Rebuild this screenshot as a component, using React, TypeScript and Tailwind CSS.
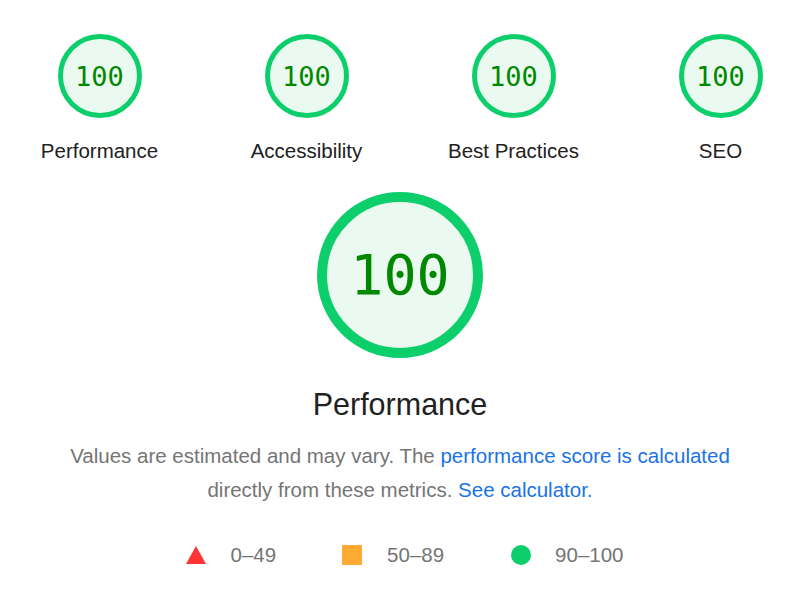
import React from "react";

function Gauge({ size, stroke, fontClass }: { size: number; stroke: number; fontClass: string }) {
  const r = size / 2 - stroke / 2;
  return (
    <div className="relative flex items-center justify-center" style={{ width: size, height: size }}>
      <svg width={size} height={size} viewBox={`0 0 ${size} ${size}`} className="absolute inset-0">
        <circle cx={size / 2} cy={size / 2} r={r} fill="#ebfaf1" stroke="#0ccf6b" strokeWidth={stroke} />
      </svg>
      <span className={`relative text-[#008800] ${fontClass}`} style={{ fontFamily: '"DejaVu Sans Mono", monospace' }}>
        100
      </span>
    </div>
  );
}

export default function App() {
  const cats = ["Performance", "Accessibility", "Best Practices", "SEO"];
  return (
    <div className="w-[800px] h-[600px] bg-white overflow-hidden" style={{ fontFamily: '"Liberation Sans", Arial, sans-serif' }}>
      <div className="grid grid-cols-[207px_207px_207px_207px] -ml-[4px] pt-[34px]">
        {cats.map((c) => (
          <div key={c} className="flex flex-col items-center">
            <Gauge size={84} stroke={5} fontClass="text-[27px] leading-none" />
            <div className="mt-[21px] text-[20.5px] leading-[24px] text-[#212121]">{c}</div>
          </div>
        ))}
      </div>
      <div className="flex flex-col items-center mt-[29px]">
        <Gauge size={166} stroke={10} fontClass="text-[55px] leading-none" />
        <div className="mt-[28px] text-[30.5px] leading-[36px] text-[#212121]">Performance</div>
        <div className="mt-[17px] text-[20.5px] leading-[34px] text-[#757575] text-center">
          Values are estimated and may vary. The <span className="text-[#1a73e8]">performance score is calculated</span>
          <br />
          directly from these metrics. <span className="text-[#1a73e8]">See calculator.</span>
        </div>
        <div className="mt-[36px] flex items-center text-[20.5px] leading-[24px] text-[#757575] ml-[10px]">
          <div className="flex items-center">
            <svg width="20" height="18" viewBox="0 0 20 18"><polygon points="10,0 20,18 0,18" fill="#ff3333" /></svg>
            <span className="ml-[24px]">0–49</span>
          </div>
          <div className="flex items-center ml-[66px]">
            <div className="w-[20px] h-[20px] bg-[#ffaa33]" />
            <span className="ml-[25px]">50–89</span>
          </div>
          <div className="flex items-center ml-[67px]">
            <div className="w-[20px] h-[20px] rounded-full bg-[#0ccf6b]" />
            <span className="ml-[24px]">90–100</span>
          </div>
        </div>
      </div>
    </div>
  );
}
